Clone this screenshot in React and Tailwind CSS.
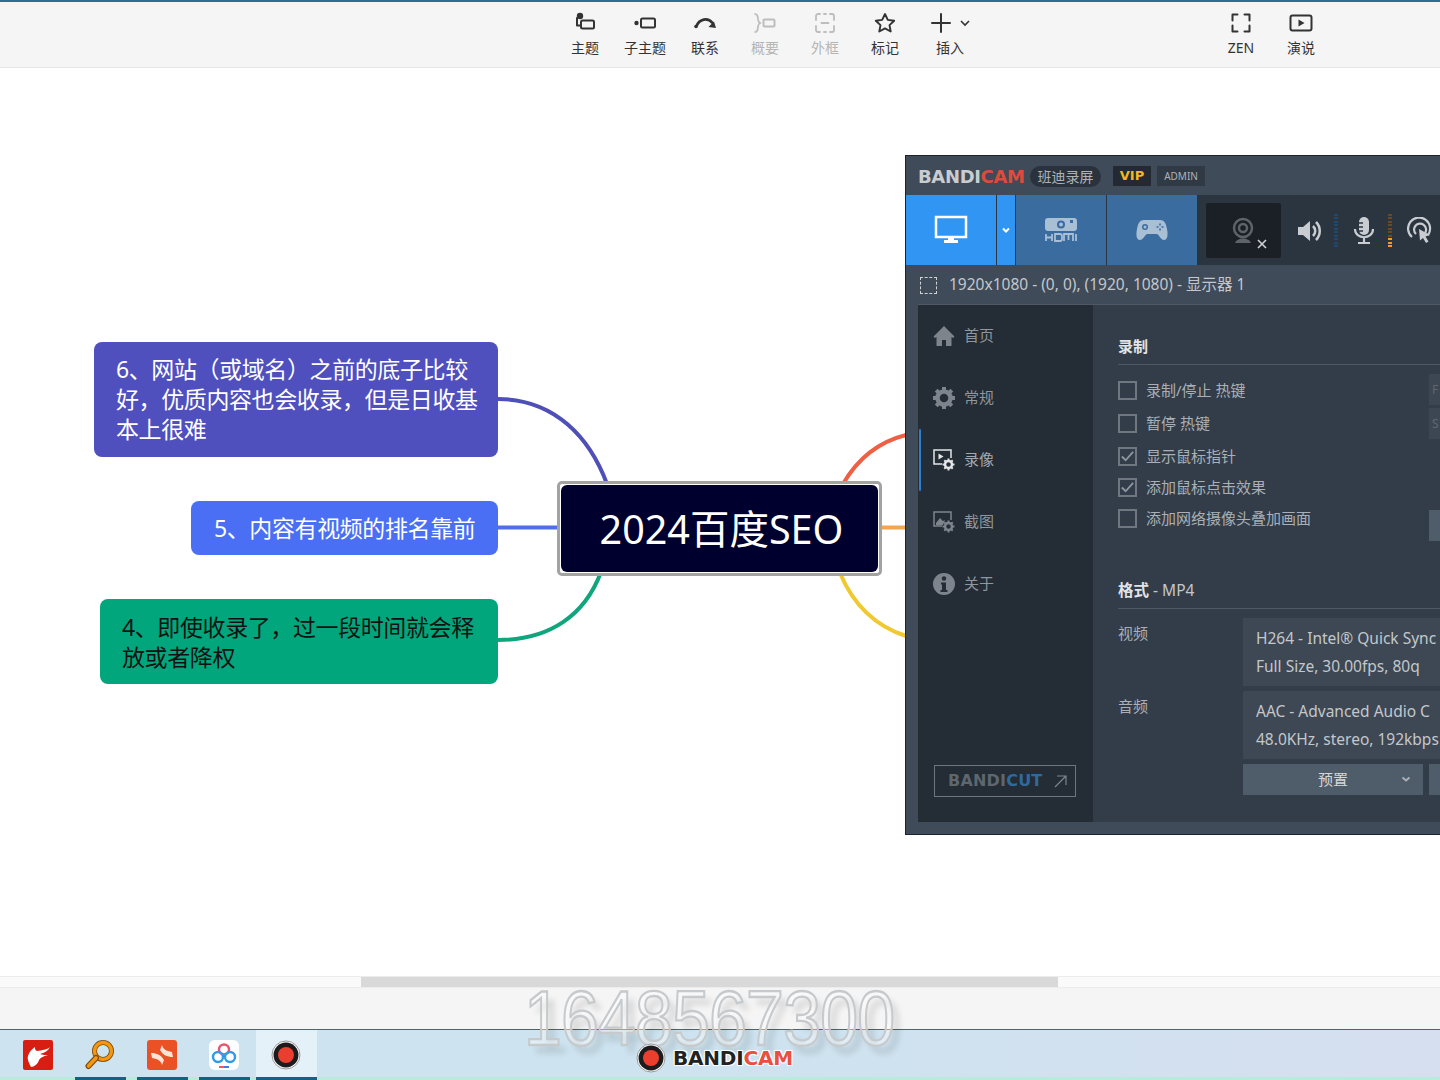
const cjk = "font-['Noto_Sans','Noto_Sans_CJK_SC',sans-serif]";

const ToolIcon = ({ children, className = 'text-[#333]' }) => (
  <svg viewBox="0 0 24 24" className={`h-6 w-6 ${className}`} fill="none" stroke="currentColor" strokeWidth="2" strokeLinecap="round" strokeLinejoin="round">
    {children}
  </svg>
);

const tools = [
  { label: '主题', icon: <><circle cx="7" cy="5" r="2.200" fill="currentColor" /><path d="M4 7v7.500h3.500" /><rect x="8" y="9.500" width="13" height="8" rx="1.500" /></> },
  { label: '子主题', icon: <><circle cx="3.500" cy="12" r="2.200" fill="currentColor" stroke="none" /><rect x="8" y="7.500" width="14" height="9" rx="1.500" /></> },
  { label: '联系', icon: <><path d="M3.500 15c3-7 11-9 16-3" strokeWidth="2.600" /><path d="M23 17l-7.500-1 5.500-5.500z" fill="currentColor" stroke="none" /><circle cx="3" cy="15.500" r="1.800" fill="currentColor" stroke="none" /></> },
  { label: '概要', disabled: true, icon: <><path d="M2 3c3 0 2.500 2 3 5 .3 2.500.7 4 2.500 4-1.800 0-2.200 1.500-2.500 4-.5 3 0 5-3 5" strokeWidth="1.700" /><rect x="10.500" y="8.500" width="11" height="7" rx="1" /></> },
  { label: '外框', disabled: true, icon: <><path d="M7 3H5a2 2 0 0 0-2 2v4M17 3h2a2 2 0 0 1 2 2v4M7 21H5a2 2 0 0 1-2-2v-4M17 21h2a2 2 0 0 0 2-2v-4M11 3h2M11 21h2" strokeWidth="1.800" /><path d="M8.500 12h7" strokeWidth="1.800" /></> },
  { label: '标记', icon: <path d="M12 3l2.800 5.900 6.400.8-4.700 4.400 1.200 6.400L12 17.400l-5.700 3.100 1.200-6.400-4.700-4.400 6.400-.8z" strokeWidth="1.900" /> },
];

const MindNode = ({ className, children }) => (
  <div className={`absolute flex items-center whitespace-nowrap rounded-[8px] text-[23px] leading-[30px] tracking-[-0.4px] ${className}`}>
    {children}
  </div>
);

const Connectors = () => (
  <svg className="absolute left-0 top-0 h-[1080px] w-[1440px]" fill="none" strokeWidth="4">
    <path d="M498 399C555 399 590 438 607 484" stroke="#4f4fb8" />
    <path d="M498 527.500H560" stroke="#4f6ee8" />
    <path d="M498 640C550 640 585 615 601 572" stroke="#0fa67e" />
    <path d="M843 484C858 458 878 442 906 435" stroke="#ee5f43" />
    <path d="M880 527.500H906" stroke="#f2a552" />
    <path d="M840 573C853 604 875 626 906 636" stroke="#f0c930" />
  </svg>
);

const SideIcon = ({ type }) => {
  if (type === 'home') {
    return <svg viewBox="0 0 24 24" className="h-6 w-6 text-[#7d848c]" fill="currentColor"><path d="M12 2 1.500 12.500 3 14l1.500-.9V22h5.500v-6h4v6h5.500v-8.900L21 14l1.500-1.500z" /></svg>;
  }
  if (type === 'gear') {
    return <svg viewBox="0 0 24 24" className="h-6 w-6 text-[#7d848c]" fill="none" stroke="currentColor"><circle cx="12" cy="12" r="6.500" strokeWidth="4.500" /><path d="M12 1v4M12 19v4M1 12h4M19 12h4M4.200 4.200l2.800 2.800M17 17l2.800 2.800M4.200 19.800 7 17M17 7l2.800-2.800" strokeWidth="4" /></svg>;
  }
  if (type === 'video') {
    return (
      <svg viewBox="0 0 24 24" className="h-6 w-6" fill="none">
        <path d="M10 16H2V2h17v8" stroke="#e4e6e8" strokeWidth="1.500" />
        <path d="M6.500 5.500v6l5-3z" fill="#e4e6e8" />
        <circle cx="16.500" cy="16.500" r="3.500" stroke="#e4e6e8" strokeWidth="2.500" />
        <path d="M16.500 10.500v2M16.500 20.500v2M10.500 16.500h2M20.500 16.500h2M12.300 12.300l1.400 1.400M19.300 19.300l1.400 1.400M12.300 20.700l1.400-1.400M19.300 13.700l1.400-1.400" stroke="#e4e6e8" strokeWidth="2" />
      </svg>
    );
  }
  if (type === 'shot') {
    return (
      <svg viewBox="0 0 24 24" className="h-6 w-6" fill="none">
        <path d="M10 16H2V2h17v8" stroke="#7d848c" strokeWidth="1.500" />
        <path d="M4 13l4-5 3 3 2-1-2 5H4z" fill="#7d848c" />
        <circle cx="16.500" cy="16.500" r="3.500" stroke="#7d848c" strokeWidth="2.500" />
        <path d="M16.500 10.500v2M16.500 20.500v2M10.500 16.500h2M20.500 16.500h2M12.300 12.300l1.400 1.400M19.300 19.300l1.400 1.400M12.300 20.700l1.400-1.400M19.300 13.700l1.400-1.400" stroke="#7d848c" strokeWidth="2" />
      </svg>
    );
  }
  return <svg viewBox="0 0 24 24" className="h-6 w-6"><circle cx="12" cy="12" r="11" fill="#7d848c" /><circle cx="12" cy="6.500" r="2.200" fill="#242c35" /><path d="M9 10.500h5V18h1.500v2h-7v-2H10v-5.500H9z" fill="#242c35" /></svg>;
};

const sideItems = [
  { key: 'home', label: '首页' },
  { key: 'gear', label: '常规' },
  { key: 'video', label: '录像', active: true },
  { key: 'shot', label: '截图' },
  { key: 'info', label: '关于' },
];

const checks = [
  { label: '录制/停止 热键', h: 'h-[33px]' },
  { label: '暂停 热键', h: 'h-[33px]' },
  { label: '显示鼠标指针', on: true, h: 'h-[32px]' },
  { label: '添加鼠标点击效果', on: true, h: 'h-[31px]' },
  { label: '添加网络摄像头叠加画面', h: 'h-[31px]' },
];

const Meter = ({ color, lit }) => (
  <div className="flex h-[34px] w-1 flex-col justify-between">
    {[0, 1, 2, 3, 4, 5, 6, 7, 8, 9].map((i) => (
      <div key={i} className={`h-[2px] w-1 ${i >= 7 && lit ? 'bg-[#f39a2b]' : color}`} />
    ))}
  </div>
);

const BandicamWindow = () => (
  <div className={`absolute left-[905px] top-[155px] flex h-[680px] w-[535px] flex-col overflow-hidden border border-r-0 border-[#1c232c] bg-[#3f4b59] ${cjk}`}>
    {/* title */}
    <div className="flex h-[39px] items-center pl-3 pt-px">
      <span className="w-[108px] font-['DejaVu_Sans',sans-serif] text-[18px] font-bold tracking-[-0.35px] text-[#c9cdd1]">BANDI<span className="text-[#df4a3a]">CAM</span></span>
      <span className="ml-[4px] flex h-[21px] w-[71px] items-center justify-center rounded-full bg-[#2a333d] text-[14px] text-[#aeb3b8]">班迪录屏</span>
      <span className="ml-[12px] flex h-[20px] w-[38px] items-center justify-center bg-[#232a33] font-['DejaVu_Sans',sans-serif] text-[13px] font-bold text-[#f5b622]">VIP</span>
      <span className="ml-[6px] flex h-[20px] w-[48px] items-center justify-center bg-[#303a45] text-[10px] text-[#aeb3b8]">ADMIN</span>
    </div>

    {/* capture mode tabs */}
    <div className="flex h-[70px] items-stretch bg-[#2b3540]">
      <div className="flex w-[90px] items-center justify-center bg-[#3196f3]">
        <svg viewBox="0 0 34 30" className="h-[30px] w-[34px]" fill="none">
          <rect x="2" y="2" width="30" height="20" stroke="#fff" strokeWidth="2.500" />
          <path d="M14 22h6v3h4v3H10v-3h4z" fill="#fff" />
        </svg>
      </div>
      <div className="ml-px flex w-[18px] items-center justify-center bg-[#3196f3]">
        <svg viewBox="0 0 10 10" className="h-[10px] w-[10px]" fill="none" stroke="#fff" strokeWidth="2"><path d="M2 3.500l3 3 3-3" /></svg>
      </div>
      <div className="ml-px flex w-[90px] items-center justify-center bg-[#3a6c9f]">
        <svg viewBox="0 0 34 26" className="h-[26px] w-[34px]">
          <rect x="1" y="1" width="32" height="13" rx="3" fill="#a9bfd4" />
          <circle cx="17" cy="7.500" r="4" fill="#3a6c9f" />
          <circle cx="17" cy="7.500" r="2" fill="#a9bfd4" />
          <rect x="26" y="3" width="3" height="3" fill="#3a6c9f" />
          <path d="M2 17v7M8 17v7M2 20.500h6M11 17h5a2 2 0 0 1 2 2v3a2 2 0 0 1-2 2h-5zM20 24v-7h9v7M24.500 17v6M32 17v7" stroke="#a9bfd4" strokeWidth="1.800" fill="none" />
        </svg>
      </div>
      <div className="ml-px flex w-[90px] items-center justify-center bg-[#3a6c9f]">
        <svg viewBox="0 0 34 26" className="h-[26px] w-[34px]">
          <path d="M9 3h16c4 0 6 3 7 9 1 5 1 11-3 11-3 0-5-5-7-6H12c-2 1-4 6-7 6-4 0-4-6-3-11 1-6 3-9 7-9z" fill="#a9bfd4" />
          <circle cx="10" cy="10" r="3" fill="#3a6c9f" />
          <circle cx="10" cy="10" r="1.500" fill="#a9bfd4" />
          <path d="M25 6.500v2M25 11.500v2M21.500 10h2M26.500 10h2" stroke="#3a6c9f" strokeWidth="1.600" />
        </svg>
      </div>
      <div className="ml-[9px] mt-2 flex h-[55px] w-[75px] items-center justify-center rounded-[2px] bg-[#1b2026] pl-[14px] pt-[4px]">
        <svg viewBox="0 0 44 36" className="h-9 w-11" fill="none">
          <circle cx="14" cy="13" r="9" stroke="#5d6368" strokeWidth="2.500" />
          <circle cx="14" cy="13" r="4" stroke="#5d6368" strokeWidth="2.500" />
          <path d="M6 28c2-6 14-6 16 0z" fill="#5d6368" />
          <path d="M29 25l8 8M37 25l-8 8" stroke="#d0d3d6" strokeWidth="1.600" />
        </svg>
      </div>
      <div className="flex flex-1 items-center pl-[16px] pt-px">
        <svg viewBox="0 0 26 26" className="h-[26px] w-[26px]" fill="none">
          <path d="M1 9h5l7-6v20l-7-6H1z" fill="#c9cdd1" />
          <path d="M16 8c3 3 3 7 0 10M19 4c5 5 5 13 0 18" stroke="#c9cdd1" strokeWidth="2.500" />
        </svg>
        <div className="ml-[11px]"><Meter color="bg-[#22486f]" /></div>
        <svg viewBox="0 0 26 30" className="ml-[13px] h-[30px] w-[26px]" fill="none">
          <rect x="8" y="1" width="10" height="18" rx="5" fill="#c9cdd1" />
          <path d="M8 7h4M8 11h4M8 15h4" stroke="#2b3540" strokeWidth="1.500" />
          <path d="M4 13c0 11 18 11 18 0M13 22v4M7 27h12" stroke="#c9cdd1" strokeWidth="2.200" />
        </svg>
        <div className="ml-[11px]"><Meter color="bg-[#6b4a22]" lit /></div>
        <svg viewBox="0 0 26 28" className="ml-[15px] h-[28px] w-[26px]" fill="none">
          <path d="M5 20a11 11 0 1 1 16-2M9 17a6 6 0 1 1 9-1" stroke="#c9cdd1" strokeWidth="2.200" />
          <path d="M12 12l11 6-4.500 1.500 3 5-2.500 1.500-3-5-3 2.500z" fill="#c9cdd1" />
        </svg>
      </div>
    </div>

    {/* capture region */}
    <div className="flex h-[39px] items-center pl-[14px] pt-px text-[15.500px] text-[#c3c7cb]">
      <div className="h-[17px] w-[17px] border border-dashed border-[#d0d3d6]" />
      <span className="ml-3">1920x1080 - (0, 0), (1920, 1080) - 显示器 1</span>
    </div>

    {/* body */}
    <div className="ml-3 flex h-[518px] border-t border-[#4e5965]">
      <div className="relative flex w-[175px] shrink-0 flex-col bg-[#242c35]">
        {sideItems.map((item) => (
          <div key={item.key} className="relative flex h-[62px] items-center pb-px pl-[14px]">
            {item.active ? <div className="absolute left-[1px] top-0 h-[62px] w-[2px] rounded-full bg-[#2f7fd1]" /> : null}
            <SideIcon type={item.key} />
            <span className={`ml-[8px] text-[15px] ${item.active ? 'text-[#a5aab0]' : 'text-[#8f969d]'}`}>{item.label}</span>
          </div>
        ))}
        <div className="ml-[16px] mt-[150px] flex h-[32px] w-[142px] items-center justify-between border border-[#6d757d] pl-[13px] pr-[8px]">
          <span className="font-['DejaVu_Sans',sans-serif] text-[16px] font-bold tracking-[0.2px] text-[#5e666e]">BANDI<span className="text-[#2f6a9e]">CUT</span></span>
          <svg viewBox="0 0 14 14" className="h-[14px] w-[14px]" fill="none" stroke="#7d848c" strokeWidth="1.200"><path d="M2 13 13 2M4 2h9v9" /></svg>
        </div>
      </div>
      <div className="w-[348px] shrink-0 bg-[#333d49] pl-[25px]">
        <div className="flex h-[60px] items-end border-b border-[#4e5965] pb-[7px] text-[15px] font-bold text-[#e2e4e6]">录制</div>
        <div className="relative pt-[9px]">
          {checks.map((c) => (
            <div key={c.label} className={`flex items-center ${c.h}`}>
              <div className="flex h-[19px] w-[19px] items-center justify-center border-2 border-[#6f7780]">
                {c.on ? <svg viewBox="0 0 16 16" className="h-[15px] w-[15px]" fill="none" stroke="#8f969d" strokeWidth="2"><path d="M2 8l4 4 8-9" /></svg> : null}
              </div>
              <span className="ml-[9px] text-[15px] text-[#aab0b5]">{c.label}</span>
            </div>
          ))}
          <div className="absolute left-[311px] top-[9px] flex h-[31px] w-[20px] items-center bg-[#3d4753] pl-[3px] text-[12px] text-[#5f6872]">F</div>
          <div className="absolute left-[311px] top-[43px] flex h-[31px] w-[20px] items-center bg-[#3d4753] pl-[3px] text-[12px] text-[#5f6872]">S</div>
          <div className="absolute left-[311px] top-[145px] h-[31px] w-[20px] bg-[#4f5c69]" />
        </div>
        <div className="mt-[31px] flex h-[44px] items-end border-b border-[#4e5965] pb-[6px] text-[15.500px] text-[#c3c7cb]"><span className="font-bold text-[#e2e4e6]">格式</span>&nbsp;- MP4</div>
        <div className="mt-[9px] flex">
          <div className="w-[125px] pt-[5px] text-[15px] leading-5 text-[#aab0b5]">视频</div>
          <div className="flex h-[68px] w-[198px] flex-col justify-center bg-[#3d4854] pl-[13px] text-[15.500px] leading-[28px] text-[#c3c7cb]">
            <span className="whitespace-nowrap">H264 - Intel® Quick Sync</span>
            <span className="whitespace-nowrap">Full Size, 30.00fps, 80q</span>
          </div>
        </div>
        <div className="mt-[5px] flex">
          <div className="w-[125px] pt-[5px] text-[15px] leading-5 text-[#aab0b5]">音频</div>
          <div className="flex h-[68px] w-[198px] flex-col justify-center bg-[#3d4854] pl-[13px] text-[15.500px] leading-[28px] text-[#c3c7cb]">
            <span className="whitespace-nowrap">AAC - Advanced Audio C</span>
            <span className="whitespace-nowrap">48.0KHz, stereo, 192kbps</span>
          </div>
        </div>
        <div className="ml-[125px] mt-[5px] flex gap-[6px]">
          <div className="relative flex h-[31px] w-[180px] shrink-0 items-center justify-center bg-[#4f5c69] text-[15px] text-[#d5d8db]">
            预置
            <svg viewBox="0 0 10 10" className="absolute right-[12px] top-[10px] h-[10px] w-[10px]" fill="none" stroke="#aab0b5" strokeWidth="2"><path d="M1.500 3.500 5 6.500l3.500-3" /></svg>
          </div>
          <div className="h-[31px] w-[20px] bg-[#4f5c69]" />
        </div>
      </div>
    </div>
  </div>
);

const RecordDot = ({ className }) => (
  <svg viewBox="0 0 30 30" className={className}>
    <circle cx="15" cy="15" r="14" fill="#fff" stroke="#9a9a9a" />
    <circle cx="15" cy="15" r="12.500" fill="#1c1c1e" />
    <circle cx="15" cy="15" r="8" fill="#ea3f2f" />
  </svg>
);

const taskIcons = [
  (
    <svg viewBox="0 0 30 30" className="h-[30px] w-[30px]">
      <rect width="30" height="30" rx="2" fill="#d81e12" />
      <path d="M27 7c-3 3-8 3-13 4-2-1-2-2-2-4-3 2-6 5-7 9-1 3 1 7 3 11 3 0 7-3 8-7 1-2 4-4 9-5-2 0-6 0-8-1 4-1 8-3 10-7z" fill="#fff" />
    </svg>
  ),
  (
    <svg viewBox="0 0 30 30" className="h-[30px] w-[30px]" fill="none">
      <circle cx="18" cy="11" r="8.500" stroke="#7d4a08" strokeWidth="5" />
      <circle cx="18" cy="11" r="8.500" stroke="#f5960f" strokeWidth="3.400" />
      <path d="M11 18 3.500 26" stroke="#7d4a08" strokeWidth="6" strokeLinecap="round" />
      <path d="M11 18 3.500 26" stroke="#f5960f" strokeWidth="3.600" strokeLinecap="round" />
    </svg>
  ),
  (
    <svg viewBox="0 0 30 30" className="h-[30px] w-[30px]">
      <rect width="30" height="30" rx="3" fill="#ea5226" />
      <path d="M15 5c1 4 4 6 10 7l1 5c-6 0-10-2-13-7zM15 25c-1-4-4-6-10-7l-1-5c6 0 10 2 13 7z" fill="#fbe3d6" />
    </svg>
  ),
  (
    <svg viewBox="0 0 30 30" className="h-[30px] w-[30px]" fill="none">
      <rect width="30" height="30" rx="6" fill="#fff" />
      <circle cx="15" cy="9.500" r="5" stroke="#e5556b" strokeWidth="2.400" />
      <circle cx="9" cy="17" r="5" stroke="#2f9ce8" strokeWidth="2.400" />
      <circle cx="21" cy="17" r="5" stroke="#2f9ce8" strokeWidth="2.400" />
      <path d="M10 27h5" stroke="#ef5a5a" strokeWidth="2" />
      <path d="M15 27h5" stroke="#3a7fe8" strokeWidth="2" />
    </svg>
  ),
];

export default function App() {
  return (
    <div className={`relative flex h-[1080px] w-[1440px] flex-col overflow-hidden bg-white ${cjk}`}>
      <header className="flex h-[68px] shrink-0 border-b border-t-2 border-b-[#e6e6e6] border-t-[#2a6f97] bg-[#f5f5f5] pl-[555px]">
        {tools.map((t) => (
          <div key={t.label} className="flex w-[60px] flex-col items-center pt-[9px]">
            <ToolIcon className={t.disabled ? 'text-[#bdbdbd]' : 'text-[#333]'}>{t.icon}</ToolIcon>
            <span className={`mt-[4px] text-[14px] leading-[18px] ${t.disabled ? 'text-[#b5b5b5]' : 'text-[#333]'}`}>{t.label}</span>
          </div>
        ))}
        <div className="flex w-[70px] flex-col items-center pt-[9px]">
          <div className="flex items-center">
            <ToolIcon><path d="M12 3v18M3 12h18" /></ToolIcon>
            <svg viewBox="0 0 12 12" className="ml-[6px] h-3 w-3" fill="none" stroke="#333" strokeWidth="1.600"><path d="M2 4l4 4 4-4" /></svg>
          </div>
          <span className="mt-[4px] text-[14px] leading-[18px] text-[#333]">插入</span>
        </div>
        <div className="ml-[226px] flex w-[60px] flex-col items-center pt-[9px]">
          <ToolIcon><path d="M8.500 3.500h-5v6M15.500 3.500h5v6M8.500 20.500h-5v-6M15.500 20.500h5v-6" /></ToolIcon>
          <span className="mt-[4px] text-[14px] leading-[18px] text-[#333]">ZEN</span>
        </div>
        <div className="flex w-[60px] flex-col items-center pt-[9px]">
          <ToolIcon><rect x="1.500" y="4.500" width="21" height="15" rx="2" /><path d="M9.500 8.500v7l6-3.500z" fill="currentColor" stroke="none" /></ToolIcon>
          <span className="mt-[4px] text-[14px] leading-[18px] text-[#333]">演说</span>
        </div>
      </header>

      <main className="h-[908px] shrink-0 bg-white" />

      <Connectors />

      <MindNode className="left-[94px] top-[342px] h-[115px] w-[404px] bg-[#4f4fbd] pb-[1px] pl-[22px] text-white">
        <div>6、网站（或域名）之前的底子比较<br />好，优质内容也会收录，但是日收基<br />本上很难</div>
      </MindNode>
      <MindNode className="left-[191px] top-[501px] h-[54px] w-[307px] bg-[#4a6ff5] pl-[23px] text-white">
        5、内容有视频的排名靠前
      </MindNode>
      <MindNode className="left-[100px] top-[599px] h-[85px] w-[398px] bg-[#02a67c] pl-[22px] text-[#111]">
        <div>4、即使收录了，过一段时间就会释<br />放或者降权</div>
      </MindNode>

      <div className="absolute left-[557px] top-[481px] flex h-[95px] w-[325px] rounded-[5px] border-[3px] border-[#a3a3a3] bg-white p-px">
        <div className="flex flex-1 items-center justify-center rounded-[6px] bg-[#00002e] pl-[4px] pt-[2px] text-[39.500px] text-white">2024百度SEO</div>
      </div>

      <BandicamWindow />

      <div className="h-[12px] shrink-0 border-y border-[#ececec] bg-[#fafafa] pl-[361px]">
        <div className="h-[10px] w-[697px] bg-[#d9d9d9]" />
      </div>
      <div className="h-[41px] shrink-0 bg-[#f5f5f5]" />
      <footer className="flex h-[51px] shrink-0 flex-col border-t border-[#2a6f97] bg-gradient-to-r from-[#cde3ef] via-[#cde3ef] to-[#d6dff0]">
        <div className="flex h-[47px] items-stretch">
          <div className="flex w-[75px] items-center justify-center pt-[2px]">{taskIcons[0]}</div>
          <div className="flex w-[62px] items-center justify-center pt-[2px] pr-[12px]">{taskIcons[1]}</div>
          <div className="flex w-[62px] items-center justify-center pt-[2px] pr-[12px]">{taskIcons[2]}</div>
          <div className="flex w-[57px] items-center justify-center pt-[2px] pr-[7px]">{taskIcons[3]}</div>
          <div className="flex w-[61px] items-center justify-center bg-[#e4f1f8] pr-[1px] pt-[2px]"><RecordDot className="h-[30px] w-[30px]" /></div>
        </div>
        <div className="flex h-[3px] bg-[#b8ecd8]">
          <div className="ml-[75px] w-[51px] bg-[#0f6480]" />
          <div className="ml-[11px] w-[51px] bg-[#0f6480]" />
          <div className="ml-[11px] w-[51px] bg-[#0f6480]" />
          <div className="ml-[6px] w-[61px] bg-[#0f6480]" />
        </div>
      </footer>

      {/* recorder watermark */}
      <div className="pointer-events-none absolute left-[524px] top-[991px] origin-top scale-y-[1.15] whitespace-nowrap font-['Liberation_Sans',sans-serif] text-[68px] leading-[46px] tracking-[-0.800px] text-white/40 [-webkit-text-stroke:2px_#c6cacd] [text-shadow:7px_7px_6px_rgba(0,0,0,0.12)]">1648567300</div>
      <div className="pointer-events-none absolute left-[636px] top-[1043px] flex h-[30px] items-center">
        <RecordDot className="h-[30px] w-[30px]" />
        <span className="ml-[7px] font-['DejaVu_Sans',sans-serif] text-[20px] leading-[22px] font-bold tracking-[-0.2px] text-[#222] [text-shadow:1px_1px_0_#fff,-1px_-1px_0_#fff,1px_-1px_0_#fff,-1px_1px_0_#fff]">BANDI<span className="text-[#e8503f]">CAM</span></span>
      </div>
    </div>
  );
}
